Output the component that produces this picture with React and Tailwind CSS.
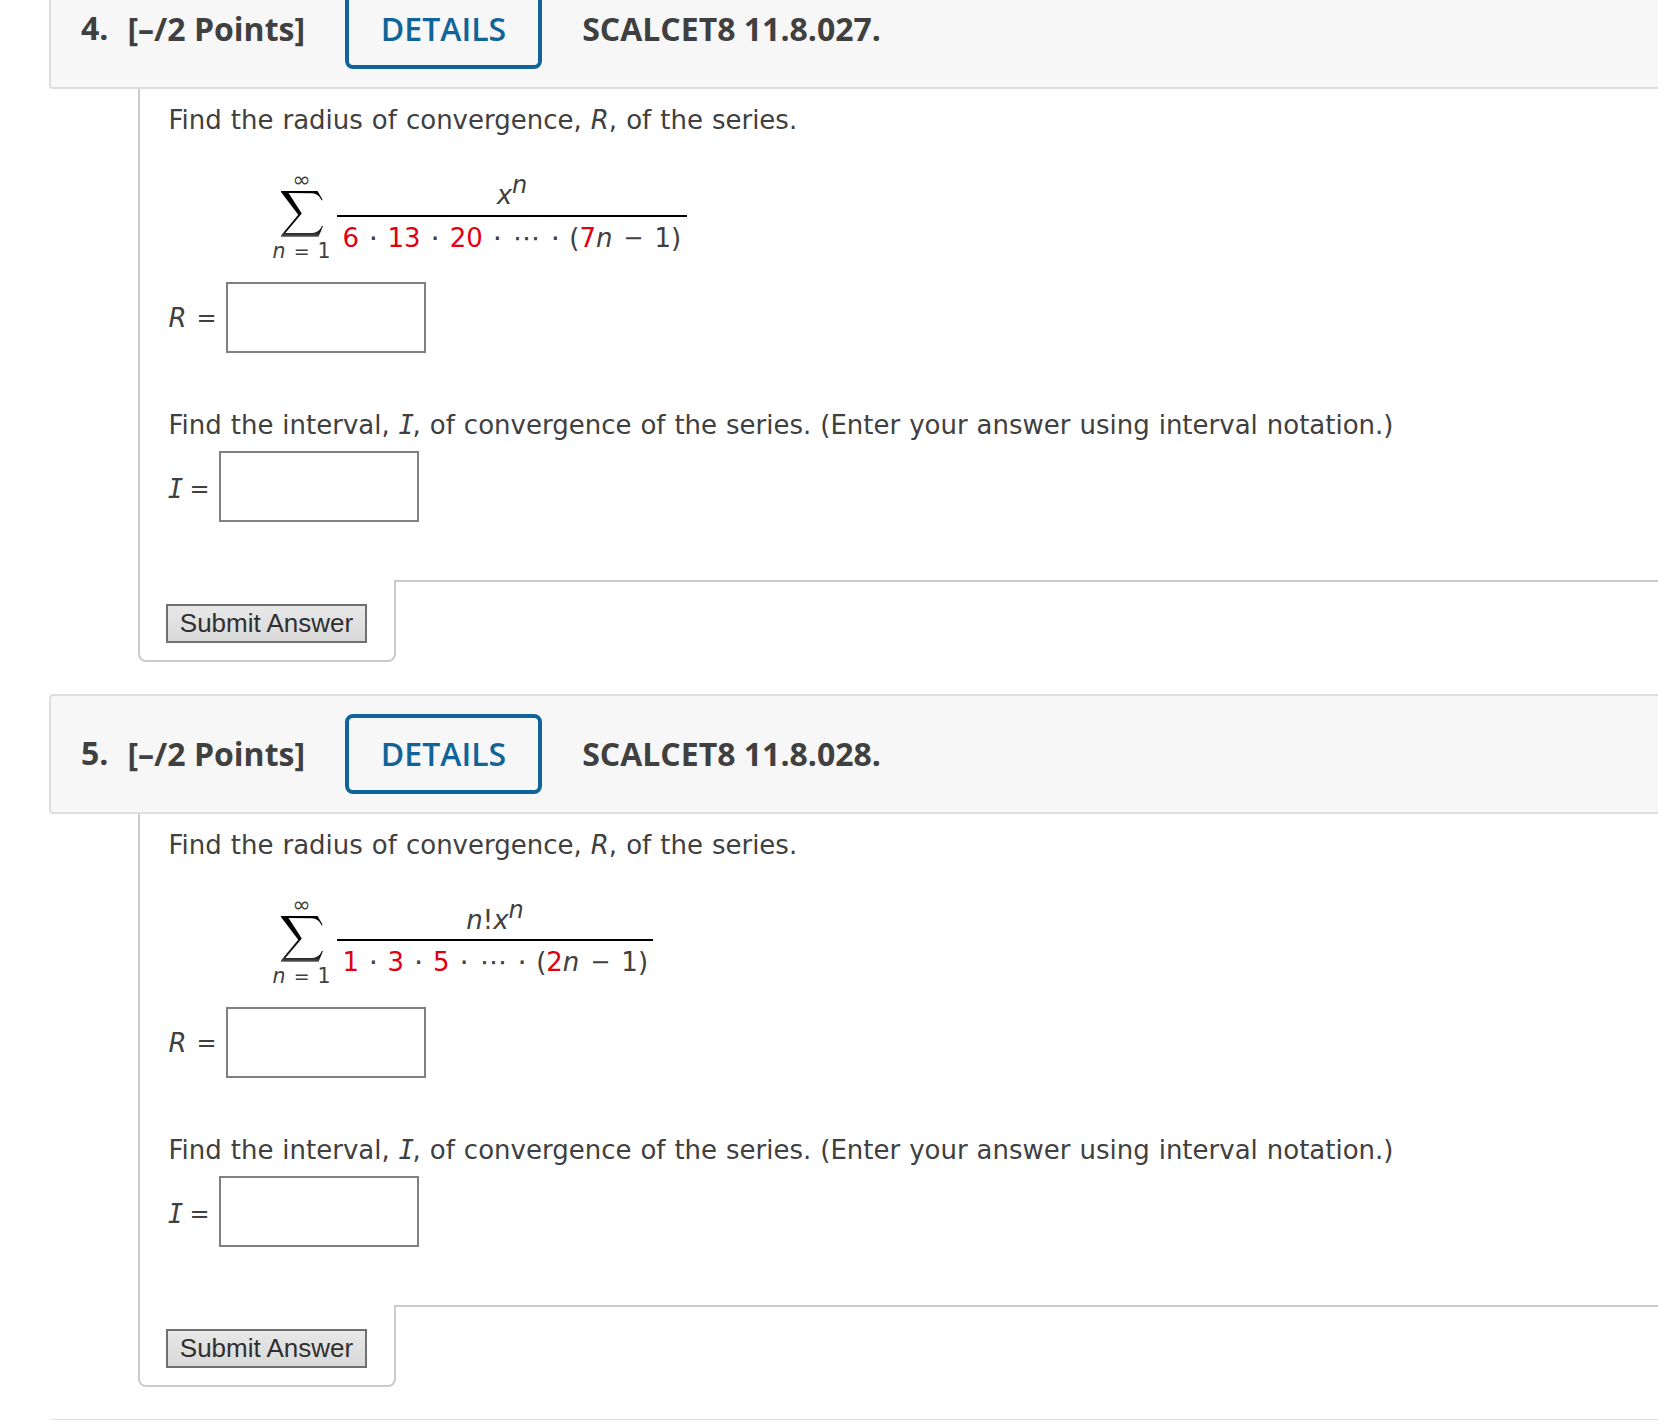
const SANS = 'font-["DejaVu_Sans",Verdana,sans-serif]';

function Sigma() {
  return (
    <svg width="42" height="46" viewBox="0 0 42 46" className="block">
      <defs>
        <linearGradient id="sigma-ink" x1="0" y1="0" x2="0" y2="1">
          <stop offset="0" stopColor="#000" />
          <stop offset="0.88" stopColor="#111" />
          <stop offset="1" stopColor="#555" />
        </linearGradient>
      </defs>
      <path
        d="M0 0H36.5C38 2.5 40 5.5 41.6 9L40.8 9.4C38.5 5.6 36.5 2.6 31 2.2L7.6 2L20.8 22.4L4.4 42L31 41.9C37 41.6 39.2 39 40.9 34.8L41.9 35.2L37.6 45.8H0V44.4L17.2 23.8L0 1Z"
        fill="url(#sigma-ink)"
      />
    </svg>
  );
}

function Dot({ wide }) {
  return <span className={(wide ? "w-[29px]" : "w-[28.5px]") + " text-center text-[29px]"}>·</span>;
}

function Red({ children }) {
  return <span className="text-[#e00012]">{children}</span>;
}

function Sup() {
  return <i className="relative -top-[10px] text-[24px]">n</i>;
}

function Tail({ coefficient, minusClass }) {
  return (
    <>
      <span className="w-[29.5px] text-center text-[27px]">⋯</span>
      <span className="w-[28px] text-center text-[29px]">·</span>
      <span>(</span>
      <Red>{coefficient}</Red>
      <i>n</i>
      <span className={minusClass}>−</span>
      <span>1</span>
      <span>)</span>
    </>
  );
}

function Fraction({ className, gap, top, bottom }) {
  return (
    <div className={"ml-[6px] mt-[12px] " + className}>
      <div className="flex h-8 justify-center">{top}</div>
      <div className={gap + " h-[2px] bg-black"} />
      <div className="mt-[5px] flex h-8 whitespace-pre pl-[5.5px]">{bottom}</div>
    </div>
  );
}

function Sum({ children }) {
  return (
    <div className="mt-[31px] flex h-[115px] items-start pl-[103.5px]">
      <div className="flex w-[59px] flex-col text-[20.5px] leading-5">
        <span className="mt-[3px] h-5 pl-[20.5px] text-[22px]">∞</span>
        <div className="mt-[1px] pl-[9px]">
          <Sigma />
        </div>
        <div className="mt-[4px] flex h-5 pl-[0.5px]">
          <i className="w-[12.5px]">n</i>
          <span className="w-[32.5px] pl-[1px] text-center text-[19px]">=</span>
          <span>1</span>
        </div>
      </div>
      {children}
    </div>
  );
}

function Answer({ label, labelClass }) {
  return (
    <div className="flex h-[71px] items-start">
      <div className={"flex " + labelClass}>
        {label}
        <span className="text-[24px]">=</span>
      </div>
      <input
        type="text"
        className="h-[71px] w-[200px] border-2 border-[#808080] bg-white px-2 outline-none"
      />
    </div>
  );
}

function LetterI() {
  return <i className='ml-[-0.2px] mr-[-1.6px] font-["DejaVu_Sans_Mono",monospace] leading-none'>I</i>;
}

function Question({ number, code, children }) {
  return (
    <section className="mb-8">
      <header className='ml-[49px] flex h-[120px] items-center rounded-l-[4px] border-2 border-r-0 border-[#dedede] bg-[#f7f7f7] pl-[30px] font-["Open_Sans",sans-serif] text-[32px] font-bold leading-[44px]'>
        <span className="mb-[2px] w-[46.5px]">{number}.</span>
        <span className="w-[217.5px]">[–/2 Points]</span>
        <button className="h-[80px] w-[197px] rounded-[8px] border-4 border-[#0f6599] text-center font-semibold leading-[44px] text-[#0f6599]">
          DETAILS
        </button>
        <span className="ml-[40.2px]">{code}</span>
      </header>
      <div className={"ml-[138px] h-[491px] border-l-2 border-[#cbcbcb] pl-[28.5px] pt-[15px] text-[26px] leading-8 " + SANS}>
        <p className="whitespace-nowrap [word-spacing:0.75px]">
          Find the radius of convergence, <i>R</i>, of the series.
        </p>
        {children}
        <Answer label={<i className="w-[28px]">R</i>} labelClass="w-[57.5px] pt-5" />
        <p className="mt-[56px] whitespace-nowrap [word-spacing:0.7px]">
          Find the interval, <LetterI />, of convergence of the series. (Enter your answer using interval notation.)
        </p>
        <div className="mt-[10px]">
          <Answer
            label={<span className="w-[21px] -ml-[0.7px] mr-[0.7px]"><LetterI /></span>}
            labelClass="w-[50.5px] pt-[22px]"
          />
        </div>
      </div>
      <div className="ml-[138px] flex h-[82px]">
        <div className="w-[258px] rounded-b-[8px] border-2 border-t-0 border-[#cbcbcb] pl-[26px] pt-[24px]">
          <button className='block h-[39px] w-[201px] whitespace-nowrap border-2 border-[#707070] bg-linear-to-b from-[#e8e8e8] to-[#d9d9d9] pb-[2px] text-center font-["Liberation_Sans",Arial,sans-serif] text-[26px] leading-[30px] text-[#303030]'>
            Submit Answer
          </button>
        </div>
        <div className="flex-1 border-t-2 border-[#cbcbcb]" />
      </div>
    </section>
  );
}

export default function App() {
  return (
    <main className="h-[1420px] w-full overflow-hidden bg-white text-[#404040]">
      <div className="-mt-[31px]">
        <Question number="4" code="SCALCET8 11.8.027.">
          <Sum>
            <Fraction
              className="w-[350px]"
              gap="mt-[4px]"
              top={<><i>x</i><Sup /></>}
              bottom={
                <>
                  <Red>6</Red>
                  <Dot />
                  <Red>13</Red>
                  <Dot wide />
                  <Red>20</Red>
                  <Dot wide />
                  <Tail coefficient="7" minusClass="w-[42px] text-center text-[24px]" />
                </>
              }
            />
          </Sum>
        </Question>
        <Question number="5" code="SCALCET8 11.8.028.">
          <Sum>
            <Fraction
              className="w-[316px]"
              gap="mt-[3px]"
              top={<><i>n</i><span>!</span><i>x</i><Sup /></>}
              bottom={
                <>
                  <Red>1</Red>
                  <Dot />
                  <Red>3</Red>
                  <Dot wide />
                  <Red>5</Red>
                  <Dot wide />
                  <Tail coefficient="2" minusClass="w-[42px] text-center text-[24px]" />
                </>
              }
            />
          </Sum>
        </Question>
        <div className="ml-[49px] h-[120px] rounded-l-[4px] border-2 border-r-0 border-[#dedede] bg-[#f7f7f7]" />
      </div>
    </main>
  );
}
